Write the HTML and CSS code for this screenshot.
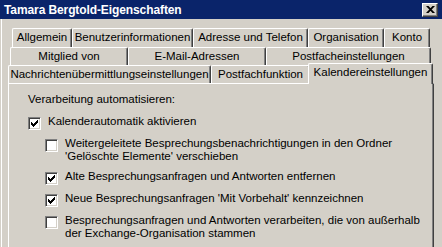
FILE: index.html
```html
<!DOCTYPE html>
<html lang="de">
<head>
  <meta charset="UTF-8" />
  <title>Tamara Bergtold-Eigenschaften</title>
  <link rel="stylesheet" href="styles.css">
</head>
<body>
  <div class="window">
    <div class="titlebar">
      <span class="title">Tamara Bergtold-Eigenschaften</span>
      <button class="close" title="Schließen">
        <svg width="9" height="7" viewBox="0 0 9 7"><path d="M0 0h2.5l6.5 7H6.5zM6.5 0H9L2.5 7H0z"/></svg>
      </button>
    </div>

    <div class="tabs">
      <div class="tab-row row1">
        <div class="tab">Allgemein</div>
        <div class="tab">Benutzerinformationen</div>
        <div class="tab">Adresse und Telefon</div>
        <div class="tab">Organisation</div>
        <div class="tab">Konto</div>
      </div>
      <div class="tab-row row2">
        <div class="tab">Mitglied von</div>
        <div class="tab">E-Mail-Adressen</div>
        <div class="tab">Postfacheinstellungen</div>
      </div>
      <div class="tab-row row3">
        <div class="tab">Nachrichtenübermittlungseinstellungen</div>
        <div class="tab">Postfachfunktion</div>
        <div class="tab active">Kalendereinstellungen</div>
      </div>
    </div>

    <div class="panel">
      <p class="group-label">Verarbeitung automatisieren:</p>

      <div class="option">
        <span class="check"><svg viewBox="0 0 7 7"><path d="M0 2h1v3H0zM1 3h1v3H1zM2 4h1v3H2zM3 3h1v3H3zM4 2h1v3H4zM5 1h1v3H5zM6 0h1v3H6z"/></svg></span>
        <span>Kalenderautomatik aktivieren</span>
      </div>

      <div class="option sub">
        <span class="check"></span>
        <span>Weitergeleitete Besprechungsbenachrichtigungen in den Ordner<br>'Gelöschte Elemente' verschieben</span>
      </div>

      <div class="option sub">
        <span class="check"><svg viewBox="0 0 7 7"><path d="M0 2h1v3H0zM1 3h1v3H1zM2 4h1v3H2zM3 3h1v3H3zM4 2h1v3H4zM5 1h1v3H5zM6 0h1v3H6z"/></svg></span>
        <span>Alte Besprechungsanfragen und Antworten entfernen</span>
      </div>

      <div class="option sub">
        <span class="check"><svg viewBox="0 0 7 7"><path d="M0 2h1v3H0zM1 3h1v3H1zM2 4h1v3H2zM3 3h1v3H3zM4 2h1v3H4zM5 1h1v3H5zM6 0h1v3H6z"/></svg></span>
        <span>Neue Besprechungsanfragen 'Mit Vorbehalt' kennzeichnen</span>
      </div>

      <div class="option sub">
        <span class="check"></span>
        <span>Besprechungsanfragen und Antworten verarbeiten, die von außerhalb<br>der Exchange-Organisation stammen</span>
      </div>
    </div>
  </div>
</body>
</html>
```

FILE: styles.css
```css
body {
  margin: 0;
  background: #d4d0c8;
  font-family: "Liberation Sans", Arial, sans-serif;
  font-size: 11.5px;
  color: #000;
  overflow: hidden;
}

.window {
  height: 247px;
  box-shadow: inset 1px 0 #d4d0c8, inset 2px 0 #fff;
}

/* Title bar */
.titlebar {
  height: 19px;
  display: flex;
  align-items: center;
  justify-content: space-between;
  padding: 0 4px;
  background: #0a246a;
  color: #fff;
}

.title {
  font-weight: bold;
  font-size: 12px;
  letter-spacing: -0.1px;
}

.close {
  width: 16px;
  height: 14px;
  padding: 0;
  display: flex;
  align-items: center;
  justify-content: center;
  background: #d4d0c8;
  border: 1px solid;
  border-color: #fff #404040 #404040 #fff;
  box-shadow: inset -1px -1px #808080;
}

.close svg {
  display: block;
  fill: #000;
}

/* Tabs */
.tabs {
  padding-top: 9px;
}

.tab-row {
  display: grid;
  height: 18px;
}

.row1 {
  grid-template-columns: 60px 121px 115px 76px 46px;
  margin-left: 12px;
  height: 19px;
}

.row2 {
  grid-template-columns: 118px 138px 165px;
  margin-left: 10px;
}

.row3 {
  grid-template-columns: 203px 99px 121px;
  margin-left: 8px;
}

.tab {
  border: 1px solid #fff;
  border-bottom: 0;
  border-right-color: #404040;
  border-radius: 2px 2px 0 0;
  box-shadow: inset -1px 0 #808080;
  background: #d4d0c8;
  text-align: center;
  line-height: 17px;
  white-space: nowrap;
}

.tab.active {
  position: relative;
  z-index: 1;
  margin: -2px -2px -1px -2px;
}

/* Panel */
.panel {
  box-sizing: border-box;
  width: 426px;
  height: 170px;
  margin-left: 8px;
  padding: 9px 0 0 19px;
  border: 1px solid #fff;
  border-right-color: #404040;
  border-bottom: 0;
  box-shadow: inset -1px 0 #808080;
}

.group-label {
  margin: 0;
  line-height: 13px;
}

.option {
  display: flex;
  align-items: flex-start;
  margin-top: 7px;
  line-height: 13px;
}

.group-label + .option {
  margin-top: 9px;
}

.sub {
  margin-left: 17px;
}

.check {
  flex: none;
  box-sizing: border-box;
  width: 13px;
  height: 13px;
  margin: 2px 7px 0 0;
  background: #fff;
  border: 1px solid;
  border-color: #808080 #fff #fff #808080;
  box-shadow: inset 1px 1px #404040, inset -1px -1px #d4d0c8;
}

.check svg {
  display: block;
  width: 7px;
  height: 7px;
  margin: 2px;
  shape-rendering: crispEdges;
}
```
